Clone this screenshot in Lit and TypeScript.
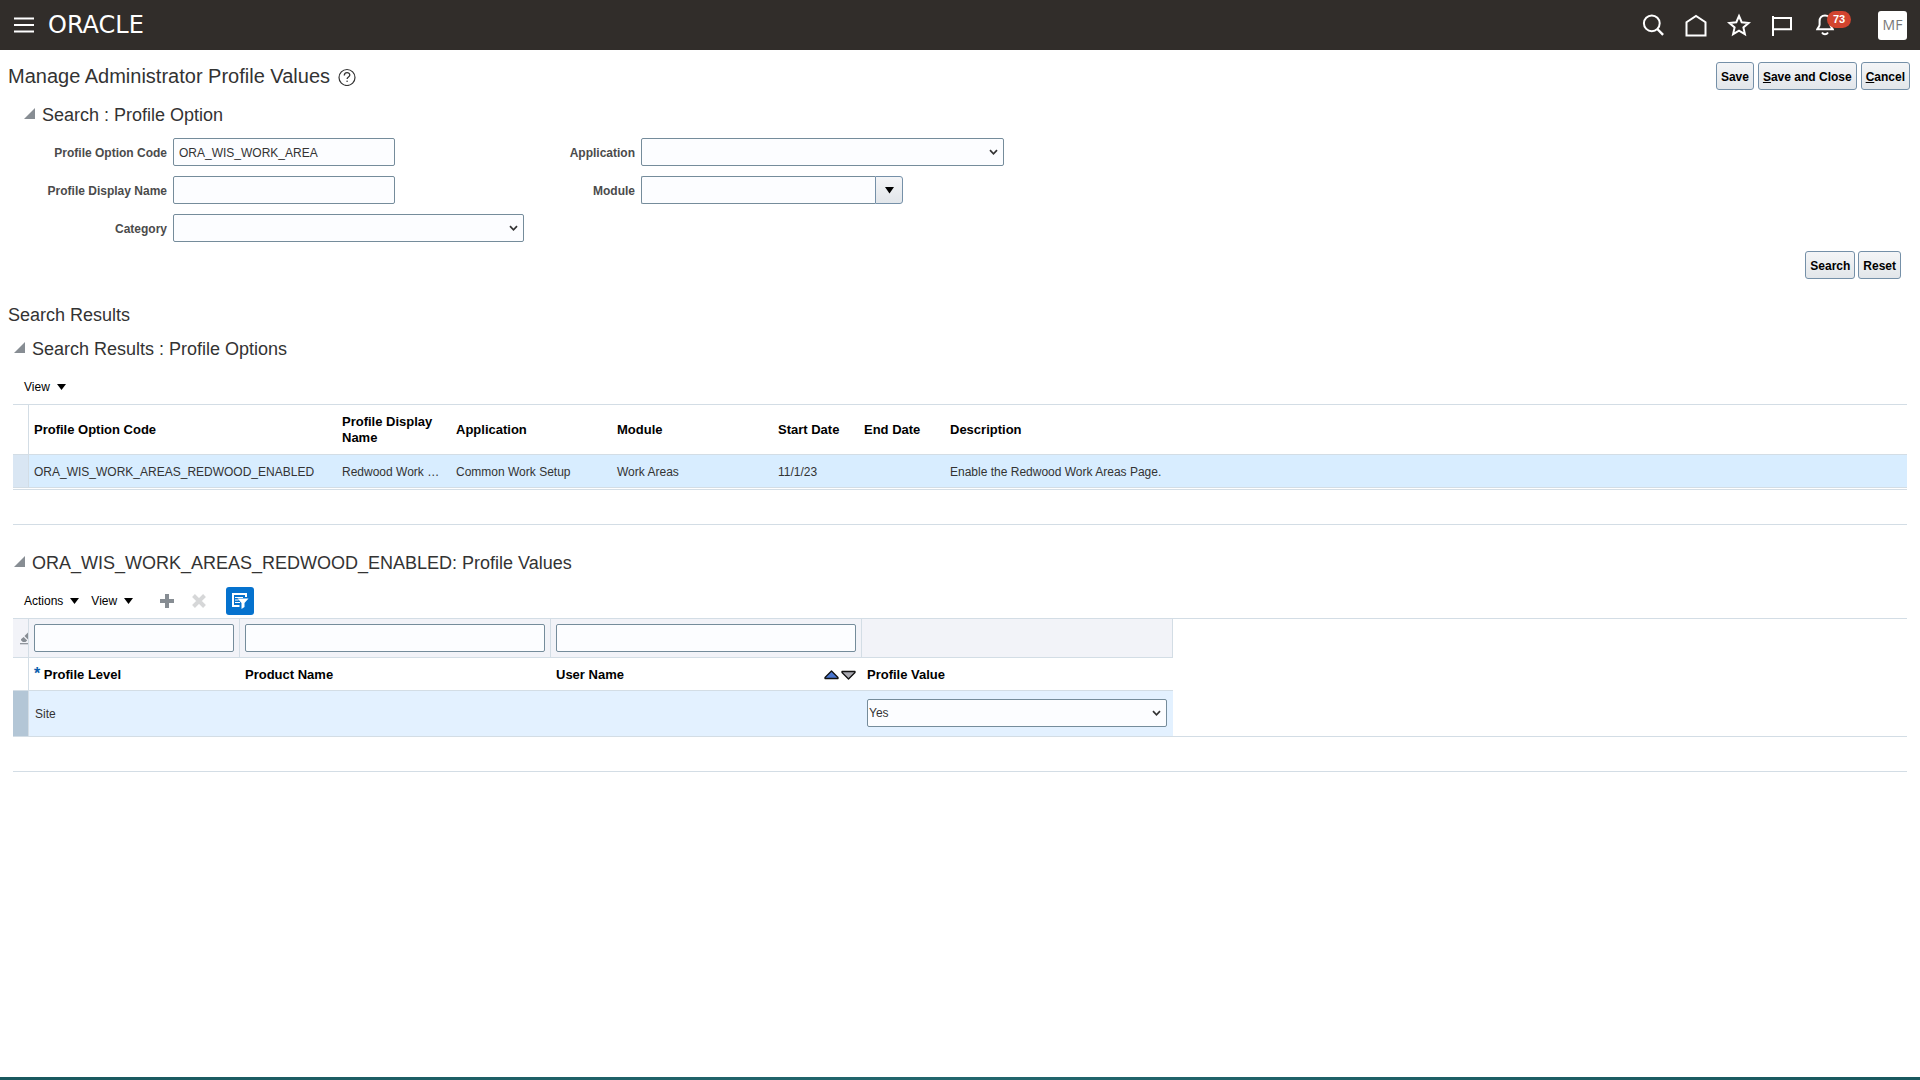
import { LitElement, html, css, svg, nothing } from "lit";
import { customElement, property } from "lit/decorators.js";

const icons = {
  menu: svg`<path d="M0 1.5h20M0 8h20M0 14.5h20" stroke="#fff" stroke-width="2"/>`,
  search: svg`<circle cx="12.8" cy="12.3" r="7.9"/><path d="M18.3 18l5.8 5.9" stroke-width="2.4"/>`,
  home: svg`<path d="M4.5 24.4V11.2L14 4.9l9.500 6.300v13.200z"/>`,
  star: svg`<path d="M14 5l2.700 6.200 6.900.7-5.200 4.500 1.500 6.700L14 19.600l-5.900 3.500 1.500-6.700-5.200-4.500 6.900-.7z"/>`,
  flag: svg`<path d="M5 5v20M5 7h18v11.300H5"/>`,
  bell: svg`<path d="M14 4.600c-3.600 0-5.400 2.600-5.400 5.600v3.600c0 1.800-1.600 2.600-2.300 4.400h15.400c-.7-1.800-2.300-2.600-2.300-4.400v-3.600c0-3-1.800-5.600-5.400-5.600z"/><path d="M11 21.500c1.500 2.300 4.500 2.300 6 0"/>`,
};

@customElement("disclosure-heading")
export class DisclosureHeading extends LitElement {
  @property() label = "";

  static styles = css`
    :host { display: block; }
    .heading {
      display: flex;
      align-items: center;
      gap: 7px;
      margin: 0;
      font-size: 18px;
      line-height: 24px;
      font-weight: 400;
      color: #333;
    }
    .toggle { display: flex; padding: 0 0 3px; border: 0; background: none; }
  `;

  render() {
    return html`<h2 class="heading">
      <button class="toggle" aria-label="Collapse ${this.label}" aria-expanded="true">
        <svg width="11" height="11" viewBox="0 0 11 11"><path d="M11 0v11H0z" fill="#878d93"/></svg>
      </button>
      <span>${this.label}</span>
    </h2>`;
  }
}

interface ProfileOption {
  code: string;
  name: string;
  application: string;
  module: string;
  start: string;
  end: string;
  description: string;
}

const options: ProfileOption[] = [
  {
    code: "ORA_WIS_WORK_AREAS_REDWOOD_ENABLED",
    name: "Redwood Work …",
    application: "Common Work Setup",
    module: "Work Areas",
    start: "11/1/23",
    end: "",
    description: "Enable the Redwood Work Areas Page.",
  },
];

@customElement("app-root")
export class AppRoot extends LitElement {
  static styles = css`
    :host {
      display: flex;
      flex-direction: column;
      min-height: 100vh;
      background: #fff;
      color: #333;
      font-family: "Liberation Sans", Arial, sans-serif;
      font-size: 12px;
      line-height: 16px;
    }
    *, *::before, *::after { box-sizing: border-box; }
    button, input, select { font: inherit; color: inherit; margin: 0; }
    button { cursor: pointer; }
    svg { display: block; }

    .banner {
      display: flex;
      align-items: center;
      height: 50px;
      padding: 0 13px 0 14px;
      background: #312d2a;
      color: #fff;
    }
    .plain { display: flex; align-items: center; padding: 0; border: 0; background: none; }
    .brand {
      margin-left: 14px;
      font-family: "DejaVu Sans", sans-serif;
      font-size: 24px;
      line-height: 24px;
      color: #fff;
      text-decoration: none;
    }
    .tools { display: flex; align-items: center; margin-left: auto; }
    .tool {
      position: relative;
      justify-content: center;
      width: 43px;
      height: 28px;
    }
    .tool svg { fill: none; stroke: #fff; stroke-width: 2; }
    .badge {
      position: absolute;
      left: 24px;
      top: 0;
      width: 24px;
      height: 17px;
      border-radius: 9px;
      background: #d1442f;
      color: #fff;
      font-size: 11px;
      line-height: 17px;
      font-weight: 700;
      text-align: center;
    }
    .avatar {
      justify-content: center;
      width: 29px;
      height: 29px;
      margin-left: 32px;
      border-radius: 3px;
      background: #fff;
      color: #777;
      font-family: "Open Sans", "Noto Sans", sans-serif;
      font-size: 14px;
    }

    .page { flex: 1; }
    .titlebar {
      display: flex;
      align-items: center;
      gap: 8px;
      padding: 12px 10px 0 8px;
    }
    .title { margin: 0; font-size: 20px; line-height: 24px; font-weight: 400; }
    .buttons { display: flex; gap: 4px; margin-left: auto; }
    .btn {
      height: 28px;
      padding: 1px 4px 0;
      border: 1px solid #7590a8;
      border-radius: 3px;
      background: linear-gradient(#f4f5f7, #e2e6ea);
      color: #000;
      font-weight: 700;
      white-space: nowrap;
    }
    .search { display: block; padding: 13px 19px 0 24px; }
    .fields { display: flex; padding-top: 11px; }
    .fieldset {
      display: grid;
      grid-auto-rows: 28px;
      align-items: center;
      align-content: start;
      gap: 10px 6px;
    }
    .first { grid-template-columns: 143px 351px; }
    .second { grid-template-columns: 111px 363px; }
    .label { padding-top: 1px; text-align: right; font-weight: 700; color: #4b4b4b; }
    .box {
      width: 100%;
      height: 28px;
      padding: 1px 5px 0;
      border: 1px solid #758c9b;
      border-radius: 2px;
      background: #fcfdff;
      color: #333;
    }
    .code { width: 222px; }
    .pick { display: grid; align-items: center; }
    .pick > * { grid-area: 1 / 1; }
    .pick select { appearance: none; padding: 0 24px 0 1px; }
    .pick svg { justify-self: end; margin-right: 6px; pointer-events: none; }
    .combo { display: flex; width: 262px; }
    .combo .box { flex: 1; min-width: 0; border-right: 0; border-radius: 2px 0 0 2px; }
    .combo .btn {
      display: flex;
      align-items: center;
      justify-content: center;
      width: 28px;
      border-radius: 0 3px 3px 0;
    }
    .actions { display: flex; justify-content: flex-end; gap: 3px; padding-top: 9px; }

    .results { margin: 24px 0 10px 8px; font-size: 18px; line-height: 24px; font-weight: 400; }
    .section { padding: 0 13px; }
    .later { padding-top: 26px; }
    .indent { padding-left: 1px; }
    .toolbar {
      display: flex;
      align-items: center;
      height: 28px;
      margin: 12px 0 3px 11px;
      color: #000;
    }
    .menu { gap: 7px; margin-right: 12px; }
    .icon { margin-left: 18px; }
    .add { margin-left: 15px; }
    .filter {
      justify-content: center;
      width: 28px;
      height: 28px;
      margin-left: 20px;
      border-radius: 3px;
      background: #0572ce;
    }
    .frame { border: solid #d3dde5; border-width: 1px 0; }
    .options { padding-bottom: 1px; }
    .blank { height: 35px; border-bottom: 1px solid #d3dde5; }
    .grid { table-layout: fixed; border-spacing: 0; }
    .wide { width: 100%; }
    .values { width: 1160px; }
    .grid th, .grid td {
      padding: 1px 5px 0;
      border-bottom: 1px solid #d3dde5;
      text-align: left;
    }
    .grid th { color: #000; font-size: 13px; line-height: 16px; font-weight: 700; }
    .grid .gutter { padding: 0; border-right: 1px solid #d3dde5; overflow: hidden; }
    .options th { height: 50px; padding-top: 0; }
    .options .row td { height: 33px; white-space: nowrap; background: #d8edff; }
    .options .row .mark { background: #d9e6f3; }
    .values .filters td { height: 39px; padding-top: 0; border-right: 1px solid #d3dde5; background: #f2f3f8; }
    .values th { height: 33px; }
    .values .row td { height: 45px; border-bottom: 0; background: #e3f1ff; }
    .values .row .mark { background: #b3c6d6; }
    .values .row .site { padding: 1px 6px 0; }
    .values .row .value { padding: 0 6px 1px 5px; }
    .values .sorted { padding-right: 6px; }
    .erase { padding-left: 7px; }
    .star { color: #0b5fae; font-size: 16px; line-height: 0; }
    .sortable { display: flex; align-items: center; justify-content: space-between; }
    .sorts { display: flex; gap: 2px; }
    .footer { height: 3px; background: linear-gradient(90deg, #19585e, #22666d 50%, #19585e); }
  `;

  private down = svg`<path d="M0 0h9L4.500 6.500z" fill="#000"/>`;

  private tool(name: "search" | "home" | "star" | "flag" | "bell", label: string, count?: number) {
    return html`<button class="plain tool" aria-label=${label}>
      <svg width="28" height="28" viewBox="0 0 28 28">${icons[name]}</svg>
      ${count ? html`<span class="badge">${count}</span>` : nothing}
    </button>`;
  }

  private select(id: string, label: string, value = "") {
    return html`<div class="pick">
      <select class="box" id=${id} aria-label=${label}><option>${value}</option></select>
      <svg width="9" height="7" viewBox="0 0 9 7"><path d="M1 1.200l3.500 3.600L8 1.200" fill="none" stroke="#333" stroke-width="1.700"/></svg>
    </div>`;
  }

  private menu(label: string) {
    return html`<button class="plain menu" aria-haspopup="menu">
      <span>${label}</span><svg width="9" height="6" viewBox="0 0 9 6.500" preserveAspectRatio="none">${this.down}</svg>
    </button>`;
  }

  render() {
    return html`
      <header class="banner">
        <button class="plain" aria-label="Navigator">
          <svg width="20" height="16" viewBox="0 0 20 16">${icons.menu}</svg>
        </button>
        <a class="brand" href="#">ORACLE</a>
        <nav class="tools">
          ${this.tool("search", "Search")}
          ${this.tool("home", "Home")}
          ${this.tool("star", "Favorites")}
          ${this.tool("flag", "Watchlist")}
          ${this.tool("bell", "Notifications", 73)}
          <button class="plain avatar">MF</button>
        </nav>
      </header>

      <main class="page">
        <div class="titlebar">
          <h1 class="title">Manage Administrator Profile Values</h1>
          <button class="plain" aria-label="Help">
            <svg width="18" height="20" viewBox="0 0 18 20" fill="none" stroke="#333">
              <circle cx="9" cy="11.500" r="8" stroke-width="1.200"/>
              <path d="M6.300 9.500c0-3.800 5.500-3.600 5.500-.6 0 2-2.700 2-2.700 4.100" stroke-width="1.300"/>
              <circle cx="9.100" cy="15.300" r=".8" fill="#333" stroke="none"/>
            </svg>
          </button>
          <div class="buttons">
            <button class="btn">Save</button>
            <button class="btn"><u>S</u>ave and Close</button>
            <button class="btn"><u>C</u>ancel</button>
          </div>
        </div>

        <form class="search" @submit=${(e: Event) => e.preventDefault()}>
          <disclosure-heading label="Search : Profile Option"></disclosure-heading>
          <div class="fields">
            <div class="fieldset first">
              <label class="label" for="code">Profile Option Code</label>
              <input class="box code" id="code" value="ORA_WIS_WORK_AREA" />
              <label class="label" for="name">Profile Display Name</label>
              <input class="box code" id="name" />
              <label class="label" for="category">Category</label>
              ${this.select("category", "Category")}
            </div>
            <div class="fieldset second">
              <label class="label" for="application">Application</label>
              ${this.select("application", "Application")}
              <label class="label" for="module">Module</label>
              <div class="combo">
                <input class="box" id="module" />
                <button class="btn" type="button" aria-label="Search: Module">
                  <svg width="9" height="7" viewBox="0 0 9 7">${this.down}</svg>
                </button>
              </div>
            </div>
          </div>
          <div class="actions">
            <button class="btn">Search</button>
            <button class="btn" type="reset">Reset</button>
          </div>
        </form>

        <h2 class="results">Search Results</h2>

        <section class="section">
          <disclosure-heading class="indent" label="Search Results : Profile Options"></disclosure-heading>
          <div class="toolbar">${this.menu("View")}</div>
          <div class="frame options">
            <table class="grid wide">
              <colgroup>
                ${[16, 308, 114, 161, 161, 86, 86].map((w) => html`<col style="width:${w}px" />`)}
                <col />
              </colgroup>
              <thead>
                <tr>
                  <td class="gutter"></td>
                  ${["Profile Option Code", "Profile Display Name", "Application", "Module", "Start Date", "End Date", "Description"].map(
                    (h) => html`<th scope="col">${h}</th>`
                  )}
                </tr>
              </thead>
              <tbody>
                ${options.map(
                  (o) => html`<tr class="row">
                    <td class="gutter mark"></td>
                    <td>${o.code}</td>
                    <td>${o.name}</td>
                    <td>${o.application}</td>
                    <td>${o.module}</td>
                    <td>${o.start}</td>
                    <td>${o.end}</td>
                    <td>${o.description}</td>
                  </tr>`
                )}
              </tbody>
            </table>
          </div>
          <div class="blank"></div>
        </section>

        <section class="section later">
          <disclosure-heading class="indent" label="ORA_WIS_WORK_AREAS_REDWOOD_ENABLED: Profile Values"></disclosure-heading>
          <div class="toolbar">
            ${this.menu("Actions")}${this.menu("View")}
            <button class="plain add" aria-label="New">
              <svg width="14" height="14" viewBox="0 0 14 14"><path d="M7 0v14M0 7h14" stroke="#878d93" stroke-width="4"/></svg>
            </button>
            <button class="plain icon" aria-label="Delete" disabled>
              <svg width="14" height="14" viewBox="0 0 14 14"><path d="M1.500 1.500l11 11M12.500 1.500l-11 11" stroke="#d6d7d8" stroke-width="4"/></svg>
            </button>
            <button class="plain filter" aria-label="Query By Example" aria-pressed="true">
              <svg width="18" height="18" viewBox="0 0 18 18" fill="none" stroke="#fff">
                <path d="M15 5V2H2v12h6.500" stroke-width="2"/>
                <path d="M4 5.500h8M4 8h3.500M4 10.500h5" stroke-width="1.200"/>
                <path d="M6.500 6.500h11l-4 4.500v4l-3 2v-6z" fill="#fff" stroke="none"/>
              </svg>
            </button>
          </div>
          <div class="frame">
            <table class="grid values">
              <colgroup>
                ${[16, 211, 311, 311, 311].map((w) => html`<col style="width:${w}px" />`)}
              </colgroup>
              <thead>
                <tr class="filters">
                  <td class="gutter">
                    <button class="plain erase" aria-label="Clear All">
                      <svg width="14" height="14" viewBox="0 0 14 14">
                        <path d="M0 12.700h14" stroke="#878d93" stroke-width="1.200"/>
                        <path d="M4.500 5L9 .5 13 4.500 8.500 9z" fill="#878d93"/>
                        <path d="M3.600 6l3.600 3.600L5.500 11H2.800L1 9.200V8.300z" fill="#878d93"/>
                      </svg>
                    </button>
                  </td>
                  <td><input class="box" aria-label="Filter Profile Level" /></td>
                  <td><input class="box" aria-label="Filter Product Name" /></td>
                  <td><input class="box" aria-label="Filter User Name" /></td>
                  <td></td>
                </tr>
                <tr>
                  <td class="gutter"></td>
                  <th scope="col"><span class="star">*</span> Profile Level</th>
                  <th scope="col">Product Name</th>
                  <th scope="col" class="sorted">
                    <div class="sortable">
                      <span>User Name</span>
                      <span class="sorts">
                        <button class="plain" aria-label="Sort Ascending">
                          <svg width="15" height="10" viewBox="0 0 15 10"><path d="M7.500 1L14 7.500v1H1v-1z" fill="#4a76cf" stroke="#111" stroke-width="1.300" stroke-linejoin="round"/></svg>
                        </button>
                        <button class="plain" aria-label="Sort Descending">
                          <svg width="15" height="10" viewBox="0 0 15 10"><path d="M7.500 9L1 2.500v-1h13v1z" fill="#a9a9b0" stroke="#111" stroke-width="1.300" stroke-linejoin="round"/></svg>
                        </button>
                      </span>
                    </div>
                  </th>
                  <th scope="col">Profile Value</th>
                </tr>
              </thead>
              <tbody>
                <tr class="row">
                  <td class="gutter mark"></td>
                  <td class="site">Site</td>
                  <td></td>
                  <td></td>
                  <td class="value">${this.select("value", "Profile Value", "Yes")}</td>
                </tr>
              </tbody>
            </table>
          </div>
          <div class="blank"></div>
        </section>
      </main>
      <footer class="footer"></footer>
    `;
  }
}
